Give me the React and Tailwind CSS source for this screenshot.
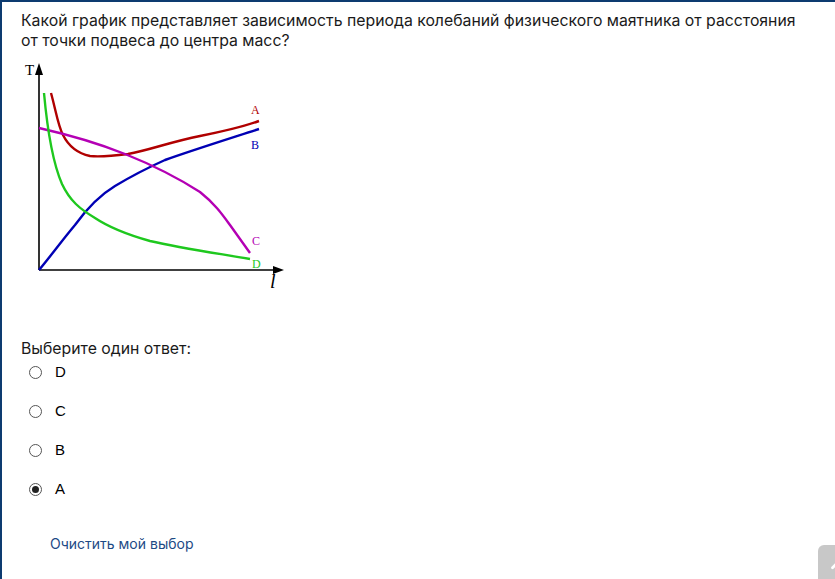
import { ChevronUp } from "lucide-react";

const options = ["D", "C", "B", "A"];

function Graph() {
    return (
        <svg width="300" height="240" viewBox="0 55 300 240" className="block">
            {/* axes */}
            <path d="M39 269 L39 72" stroke="#000" strokeWidth="1.6" fill="none" />
            <path d="M35 74 L39 62 L43 74 Z" fill="#000" />
            <path d="M39 269 L276 269" stroke="#000" strokeWidth="1.6" fill="none" />
            <path d="M273 265 L284 269 L273 273 Z" fill="#000" />
            <text x="25" y="74" fontFamily="Liberation Serif, serif" fontSize="15">T</text>
            <text x="270" y="287" fontFamily="Liberation Serif, serif" fontStyle="italic" fontSize="20">l</text>

            {/* A */}
            <path
                d="M51 92 C56 110 58 125 63 134 C68 144 76 152 90 155 C100 156 112 155 128 153 C150 149 170 141 200 135 C225 130 245 125 259 120"
                stroke="#b00000" strokeWidth="2.4" fill="none"
            />
            {/* B */}
            <path
                d="M39 269 C50 256 60 242 75 224 C88 206 100 194 115 185 C130 176 145 168 165 159 C190 150 225 139 259 128"
                stroke="#0000b4" strokeWidth="2.4" fill="none"
            />
            {/* C */}
            <path
                d="M39 127 C70 134 100 143 125 153 C150 163 175 175 200 191 C215 203 222 213 230 224 L250 252"
                stroke="#b400b4" strokeWidth="2.4" fill="none"
            />
            {/* D */}
            <path
                d="M44 92 C47 125 52 160 62 183 C70 200 80 208 95 217 C110 227 125 233 150 240 C180 247 215 252 250 258"
                stroke="#1ec81e" strokeWidth="2.4" fill="none"
            />
            <g fontFamily="Liberation Serif, serif" fontSize="12">
                <text x="251" y="113" fill="#b00000">A</text>
                <text x="251" y="148" fill="#0000b4">B</text>
                <text x="252" y="244" fill="#b400b4">C</text>
                <text x="252" y="267" fill="#1ec81e">D</text>
            </g>
        </svg>
    );
}

export default function App() {
    return (
        <div className="relative w-[835px] h-[579px] overflow-hidden bg-white border-l-2 border-t-2 border-[#0d3b70] font-['Inter',sans-serif] text-[#1a1a1a]">
            <div className="pl-[19px] pt-[9px]">
                <p className="text-[15.8px] leading-[20px] pr-8">
                    Какой график представляет зависимость периода колебаний физического маятника от расстояния от точки подвеса до центра масс?
                </p>
                <div className="-ml-[21px] mt-[5px]">
                    <Graph />
                </div>

                <p className="mt-[43px] text-[15.8px] leading-[20px]">Выберите один ответ:</p>
                <div className="flex flex-col -mt-[6px] font-['Liberation_Sans',sans-serif] text-[15px] text-black">
                    {options.map((o) => (
                        <label key={o} className="flex items-center h-[39px] gap-[13px] pl-[8px]">
                            <span className="w-[13px] h-[13px] rounded-full border border-[#555] flex items-center justify-center bg-white">
                                {o === "A" && <span className="w-[7px] h-[7px] rounded-full bg-[#222]" />}
                            </span>
                            <span>{o}</span>
                        </label>
                    ))}
                </div>

                <a className="block mt-[24px] ml-[29px] text-[14px] text-[#1d4a85]">Очистить мой выбор</a>
            </div>

            <div className="absolute left-[816px] top-[543px] w-[40px] h-[40px] rounded-[6px] bg-[#c8c8c8] flex items-center justify-center">
                <ChevronUp size={22} color="#fff" strokeWidth={3} />
            </div>
        </div>
    );
}
